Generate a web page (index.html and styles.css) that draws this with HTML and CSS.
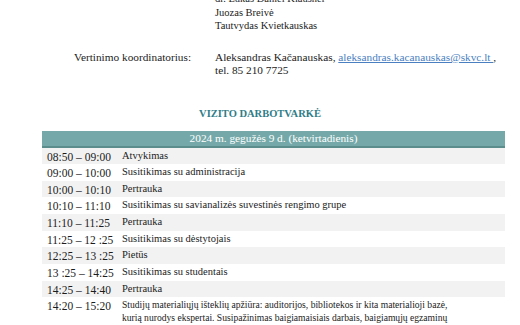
FILE: index.html
```html
<!DOCTYPE html>
<html lang="lt">
<head>
<meta charset="utf-8">
<link rel="stylesheet" href="styles.css">
</head>
<body>
<div class="page">
  <div class="people">
    <div>dr. Lukas Daniel Klausner</div>
    <div>Juozas Breivė</div>
    <div>Tautvydas Kvietkauskas</div>
  </div>
  <div class="coord">
    <div class="coord-label">Vertinimo koordinatorius:</div>
    <div class="coord-value">Aleksandras Kačanauskas, <a class="mail" href="#">aleksandras.kacanauskas@skvc.lt </a>,<br>tel. 85 210 7725</div>
  </div>
  <h2 class="title">VIZITO DARBOTVARKĖ</h2>
  <div class="agenda">
    <div class="head">2024 m. gegužės 9 d. (ketvirtadienis)</div>
    <div class="row alt"><div class="t">08:50 – 09:00</div><div class="d">Atvykimas</div></div>
    <div class="row"><div class="t">09:00 – 10:00</div><div class="d">Susitikimas su administracija</div></div>
    <div class="row alt"><div class="t">10:00 – 10:10</div><div class="d">Pertrauka</div></div>
    <div class="row"><div class="t">10:10 – 11:10</div><div class="d">Susitikimas su savianalizės suvestinės rengimo grupe</div></div>
    <div class="row alt"><div class="t">11:10 – 11:25</div><div class="d">Pertrauka</div></div>
    <div class="row"><div class="t">11:25 – 12 :25</div><div class="d">Susitikimas su dėstytojais</div></div>
    <div class="row alt"><div class="t">12:25 – 13 :25</div><div class="d">Pietūs</div></div>
    <div class="row"><div class="t">13 :25 – 14:25</div><div class="d">Susitikimas su studentais</div></div>
    <div class="row alt"><div class="t">14:25 – 14:40</div><div class="d">Pertrauka</div></div>
    <div class="row"><div class="t">14:20 – 15:20</div><div class="d long">Studijų materialiųjų išteklių apžiūra: auditorijos, bibliotekos ir kita materialioji bazė, kurią nurodys ekspertai. Susipažinimas baigiamaisiais darbais, baigiamųjų egzaminų medžiaga ir kitais dokumentais.</div></div>
  </div>
</div>
</body>
</html>
```
FILE: styles.css
```css
html, body {
  margin: 0;
  padding: 0;
  background: #ffffff;
}
.page {
  width: 520px;
  height: 325px;
  overflow: hidden;
  color: #222222;
}
.people {
  font-family: "Liberation Serif", serif;
  font-size: 10.5px;
  line-height: 13.7px;
  padding-left: 215px;
  margin-top: -8px;
}
.coord {
  display: grid;
  grid-template-columns: 215px 1fr;
  margin-top: 18px;
  font-family: "Liberation Serif", serif;
  font-size: 11.3px;
  line-height: 12.7px;
}
.coord-label {
  padding-left: 74px;
}
.mail {
  color: #4a7fc1;
  text-decoration: underline;
}
.title {
  margin: 30px 0 0 0;
  text-align: center;
  font-family: "Liberation Serif", serif;
  font-weight: bold;
  font-size: 10.5px;
  line-height: 13px;
  color: #2f7d88;
}
.agenda {
  margin: 11px 0 0 42px;
  width: 463px;
  font-family: "Liberation Serif", serif;
  display: flex;
  flex-direction: column;
}
.head {
  background: #75a9a9;
  color: #ffffff;
  font-size: 11.3px;
  height: 15px;
  line-height: 15px;
  text-align: center;
  border-bottom: 2px solid #5b8d8d;
}
.row {
  display: grid;
  grid-template-columns: 80px 340px;
  min-height: 16.65px;
}
.row.alt {
  background: #f2f2f2;
}
.t {
  padding-left: 5px;
  padding-top: 2px;
  font-size: 11.5px;
  line-height: 14px;
  color: #1c1c1c;
}
.d {
  padding-top: 1px;
  font-size: 10.5px;
  line-height: 13px;
}
.d.long {
  font-size: 9.6px;
  line-height: 12.8px;
  padding-top: 1.5px;
}
```
